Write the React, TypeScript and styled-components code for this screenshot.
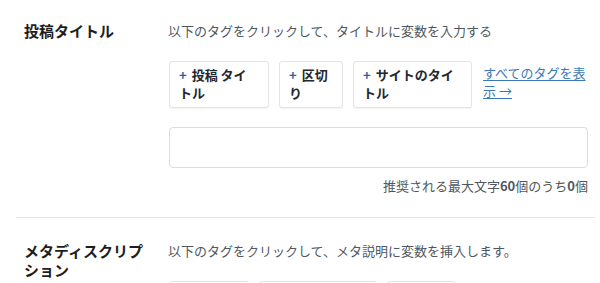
import React from "react";
import styled, { createGlobalStyle } from "styled-components";

const Global = createGlobalStyle`
  html, body { margin: 0; padding: 0; background: #fff; }
  body { font-family: "Noto Sans CJK JP", "Noto Sans", sans-serif; color: #23282d; }
`;

const Page = styled.div`
  padding: 0 5px 0 16px;
`;

const Section = styled.section<{ $last?: boolean }>`
  display: grid;
  grid-template-columns: 152px 1fr;
  padding: ${(p) => (p.$last ? "20px 0 0" : "18px 0 22px")};
  border-bottom: ${(p) => (p.$last ? "none" : "1px solid #e6e6e6")};
`;

const Label = styled.div`
  padding: 3px 14px 0 8px;
  font-size: 15px;
  font-weight: 700;
  line-height: 19px;
  color: #1e1e1e;
`;

const Content = styled.div`
  display: flex;
  flex-direction: column;
`;

const Desc = styled.p`
  margin: 4px 0 0;
  font-size: 13px;
  line-height: 18px;
  color: #50575e;
`;

const TagRow = styled.div`
  display: flex;
  align-items: flex-start;
  gap: 10px;
  margin-top: 21px;
  margin-left: 1px;
`;

const TagButton = styled.button<{ $w: number }>`
  width: ${(p) => p.$w}px;
  flex: none;
  box-sizing: border-box;
  text-align: left;
  background: #fff;
  border: 1px solid #e4e4e4;
  border-radius: 3px;
  box-shadow: 0 1px 1px rgba(0, 0, 0, 0.05);
  padding: 4px 9px 5px;
  font-family: inherit;
  font-size: 13px;
  font-weight: 700;
  line-height: 18px;
  color: #23282d;
`;

const Plus = styled.span`
  color: #2563a8;
  margin-right: 5px;
`;

const AllLink = styled.a`
  flex: 1;
  min-width: 0;
  margin-left: 1px;
  margin-top: 3px;
  font-size: 13px;
  line-height: 18px;
  color: #3a7ab8;
  text-decoration: underline;
  text-underline-offset: 2px;
`;

const Input = styled.input`
  margin-top: 19px;
  margin-left: 1px;
  height: 41px;
  box-sizing: border-box;
  border: 1px solid #dcdcde;
  border-radius: 4px;
  background: #fff;
  width: 419px;
`;

const Counter = styled.div`
  margin-top: 9px;
  width: 420px;
  text-align: right;
  font-size: 13px;
  line-height: 18px;
  color: #50575e;
  b { font-weight: 700; }
`;

type Tag = { text: string; w: number };

const titleTags: Tag[] = [
  { text: "投稿 タイトル", w: 100 },
  { text: "区切り", w: 64 },
  { text: "サイトのタイトル", w: 119 },
];

const descTags: Tag[] = [
  { text: "抜粋", w: 80 },
  { text: "投稿 タイトル", w: 118 },
  { text: "区切り", w: 69 },
];

const Tags = ({ tags }: { tags: Tag[] }) => (
  <TagRow>
    {tags.map((t) => (
      <TagButton key={t.text} $w={t.w}>
        <Plus>+</Plus>
        {t.text}
      </TagButton>
    ))}
    <AllLink href="#">すべてのタグを表示 →</AllLink>
  </TagRow>
);

export default function App() {
  return (
    <Page>
      <Global />
      <Section>
        <Label>投稿タイトル</Label>
        <Content>
          <Desc>以下のタグをクリックして、タイトルに変数を入力する</Desc>
          <Tags tags={titleTags} />
          <Input type="text" />
          <Counter>
            推奨される最大文字<b>60</b>個のうち<b>0</b>個
          </Counter>
        </Content>
      </Section>
      <Section $last>
        <Label>メタディスクリプション</Label>
        <Content>
          <Desc>以下のタグをクリックして、メタ説明に変数を挿入します。</Desc>
          <Tags tags={descTags} />
        </Content>
      </Section>
    </Page>
  );
}
